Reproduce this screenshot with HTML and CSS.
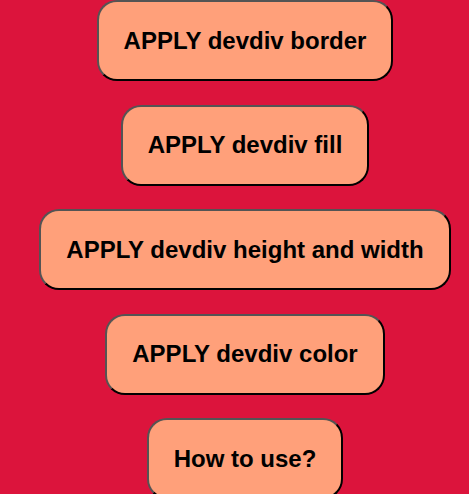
FILE: index.html
```html
<!DOCTYPE html>
<html lang="en">
<head>
    <meta charset="UTF-8">
    <meta name="viewport" content="width=device-width, initial-scale=1.0">
    <title>devdiv</title>
    <link rel="stylesheet" href="styles.css">
</head>
<body>
    <div class="menu">
        <button class="btn">APPLY devdiv border</button>
        <button class="btn">APPLY devdiv fill</button>
        <button class="btn">APPLY devdiv height and width</button>
        <button class="btn">APPLY devdiv color</button>
        <button class="btn">How to use?</button>
    </div>
</body>
</html>
```

FILE: styles.css
```css
body {
    margin: 0;
    padding: 0 0 0 21px;
    background-color: #dc143c;
    font-family: 'Liberation Sans', Arial, sans-serif;
}
.menu {
    display: flex;
    flex-direction: column;
    align-items: center;
    gap: 23.5px;
}
.btn {
    font-family: 'Liberation Sans', Arial, sans-serif;
    font-size: 24px;
    font-weight: bold;
    color: #000;
    background-color: #ffa07a;
    border: 2px outset #000;
    border-radius: 20px;
    padding: 24.5px 25px;
    cursor: pointer;
}
```
